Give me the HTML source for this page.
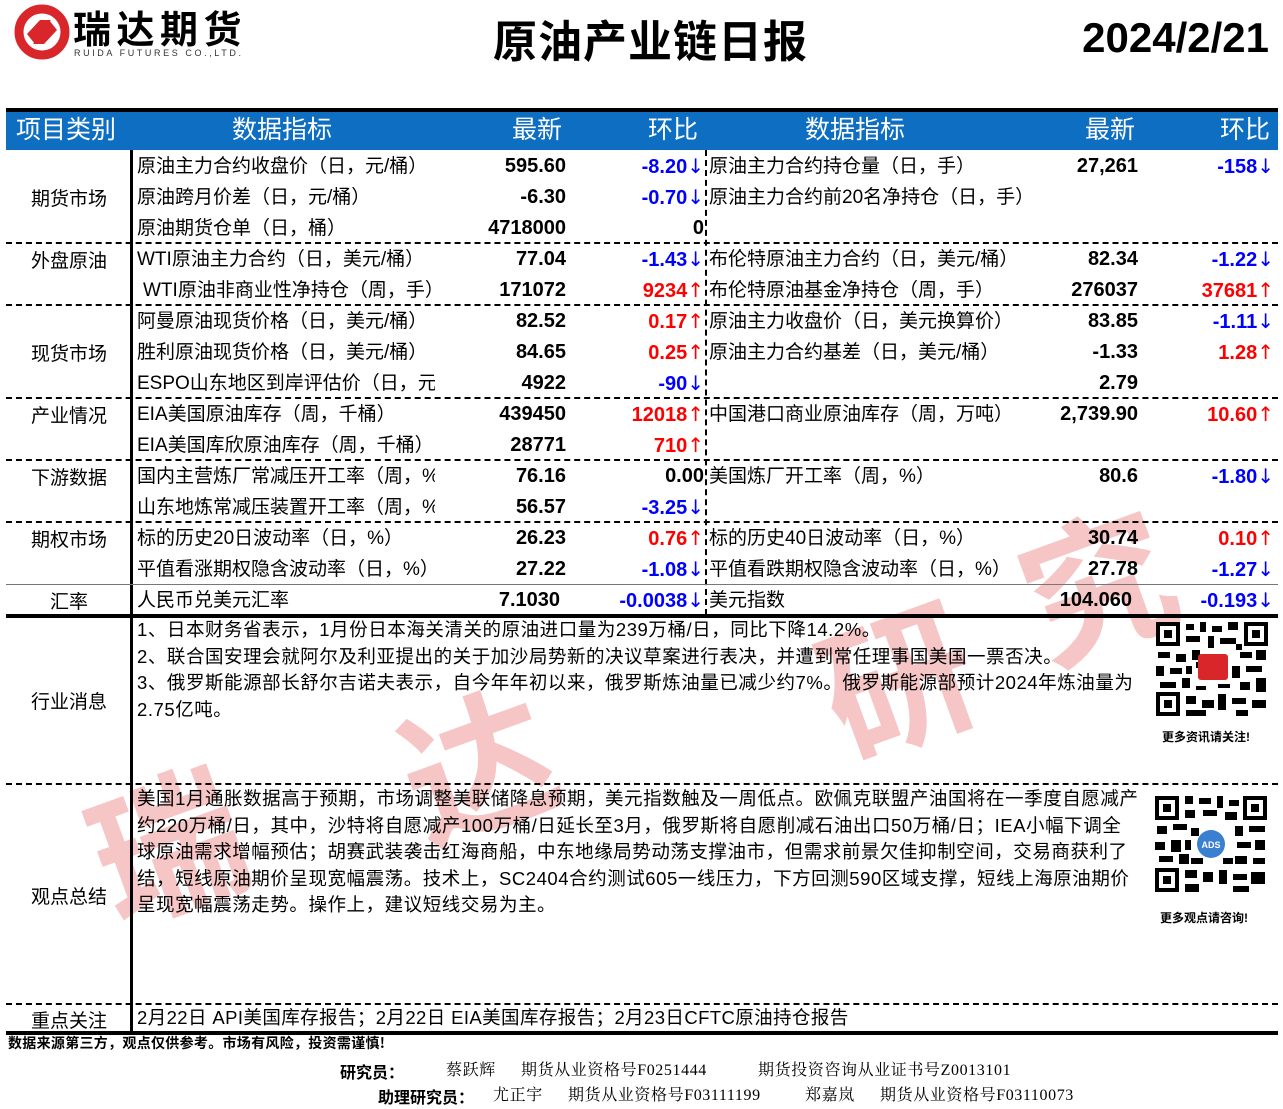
<!DOCTYPE html>
<html><head><meta charset="utf-8">
<style>
*{margin:0;padding:0;box-sizing:border-box}
body{width:1283px;height:1109px;background:#fff;position:relative;overflow:hidden;font-family:"Liberation Sans","Noto Sans CJK SC",sans-serif;color:#000}
.a{position:absolute;white-space:nowrap}
.t{font-size:19px;line-height:31px;height:31px}
.n{font-weight:bold;text-align:right;font-size:20px}
.n i{font-style:normal;font-family:"DejaVu Sans",sans-serif;font-weight:normal;font-size:20px}
.b{color:#0000ff}.r{color:#ff0000}
.hd{color:#fff;font-size:25px;line-height:38px;top:111px}
.dash{position:absolute;left:6px;width:1272px;border-top:2px dashed #000;height:0}
.wm{position:absolute;color:#f4b4b4;opacity:.75;font-weight:bold;font-size:150px;font-family:"Noto Sans CJK SC",sans-serif;transform:rotate(-20deg)}
.cat{position:absolute;left:6px;width:126px;text-align:center;font-size:19px}
.p{font-size:18.5px;line-height:26.5px;position:absolute;left:137px;letter-spacing:0.55px}
.f{position:absolute;font-size:16px;line-height:22px;font-family:'Liberation Serif','Noto Serif CJK SC',serif;white-space:nowrap;letter-spacing:0.6px}
.fb{position:absolute;font-size:16px;line-height:22px;font-weight:bold;font-family:'Noto Sans CJK SC',sans-serif;white-space:nowrap}
</style></head><body>
<div class="wm" style="left:90px;top:730px">瑞</div>
<div class="wm" style="left:400px;top:650px">达</div>
<div class="wm" style="left:820px;top:565px">研</div>
<div class="wm" style="left:1020px;top:470px">究</div>

<svg class="a" style="left:13px;top:4px" width="58" height="56" viewBox="0 0 58 56">
<circle cx="29" cy="28" r="23" fill="none" stroke="#d9262a" stroke-width="9"/>
<path d="M14 30 L27 16 L38 16 L26 28 L34 28 L22 40 Z" fill="#d9262a"/>
<path d="M44 26 L31 40 L20 40 L32 28 L24 28 L36 16 Z" fill="#d9262a"/>
</svg>
<div class="a" style="left:73px;top:4px;font-size:38px;font-weight:bold;letter-spacing:5.5px;line-height:46px;font-family:'Noto Sans CJK SC',sans-serif">瑞达期货</div>
<div class="a" style="left:74px;top:48px;font-size:9px;letter-spacing:2.6px;color:#333">RUIDA FUTURES CO.,LTD.</div>
<div class="a" style="left:493px;top:10px;font-size:44px;font-weight:bold;line-height:56px;letter-spacing:1px;font-family:'Noto Sans CJK SC',sans-serif">原油产业链日报</div>
<div class="a" style="right:14px;top:12px;font-size:42px;font-weight:bold;line-height:52px">2024/2/21</div>

<div class="a" style="left:6px;top:108px;width:1272px;height:4px;background:#000"></div>
<div class="a" style="left:6px;top:112px;width:1272px;height:38px;background:#0d6ec2"></div>
<div class="a hd" style="left:16px">项目类别</div>
<div class="a hd" style="left:232px">数据指标</div>
<div class="a hd" style="left:512px">最新</div>
<div class="a hd" style="left:648px">环比</div>
<div class="a hd" style="left:805px">数据指标</div>
<div class="a hd" style="left:1085px">最新</div>
<div class="a hd" style="left:1220px">环比</div>

<div class="a" style="left:130px;top:150px;width:3px;height:883px;background:#000"></div>
<div class="a" style="left:705px;top:150px;height:465px;border-left:2px dashed #000"></div>
<div class="dash" style="top:242px"></div>
<div class="dash" style="top:304px"></div>
<div class="dash" style="top:397px"></div>
<div class="dash" style="top:459px"></div>
<div class="dash" style="top:521px"></div>
<div class="a" style="left:6px;top:584px;width:1272px;height:1px;background:#777"></div>
<div class="a" style="left:6px;top:614px;width:1272px;height:4px;background:#000"></div>
<div class="dash" style="top:783px"></div>
<div class="dash" style="top:1003px"></div>
<div class="a" style="left:6px;top:1031px;width:1272px;height:4px;background:#000"></div>

<div class="cat" style="top:184px">期货市场</div>
<div class="cat" style="top:246px">外盘原油</div>
<div class="cat" style="top:339px">现货市场</div>
<div class="cat" style="top:401px">产业情况</div>
<div class="cat" style="top:463px">下游数据</div>
<div class="cat" style="top:525px">期权市场</div>
<div class="cat" style="top:587px">汇率</div>
<div class="cat" style="top:687px">行业消息</div>
<div class="cat" style="top:882px">观点总结</div>
<div class="cat" style="top:1006px">重点关注</div>

<div style="position:absolute;left:0;top:151px">
<div class="a t" style="left:137px;top:0">原油主力合约收盘价（日，元/桶）</div><div class="a t n" style="right:-566px;top:0">595.60</div><div class="a t n b" style="right:-704px;top:0">-8.20<i>↓</i></div>
<div class="a t" style="left:709px;top:0">原油主力合约持仓量（日，手）</div><div class="a t n" style="right:-1138px;top:0">27,261</div><div class="a t n b" style="right:-1274px;top:0">-158<i>↓</i></div>

<div class="a t" style="left:137px;top:31px">原油跨月价差（日，元/桶）</div><div class="a t n" style="right:-566px;top:31px">-6.30</div><div class="a t n b" style="right:-704px;top:31px">-0.70<i>↓</i></div>
<div class="a t" style="left:709px;top:31px">原油主力合约前20名净持仓（日，手）</div>

<div class="a t" style="left:137px;top:62px">原油期货仓单（日，桶）</div><div class="a t n" style="right:-566px;top:62px">4718000</div><div class="a t n" style="right:-704px;top:62px">0</div>

<div class="a t" style="left:137px;top:93px">WTI原油主力合约（日，美元/桶）</div><div class="a t n" style="right:-566px;top:93px">77.04</div><div class="a t n b" style="right:-704px;top:93px">-1.43<i>↓</i></div>
<div class="a t" style="left:709px;top:93px">布伦特原油主力合约（日，美元/桶）</div><div class="a t n" style="right:-1138px;top:93px">82.34</div><div class="a t n b" style="right:-1274px;top:93px">-1.22<i>↓</i></div>

<div class="a t" style="left:143px;top:124px">WTI原油非商业性净持仓（周，手）</div><div class="a t n" style="right:-566px;top:124px">171072</div><div class="a t n r" style="right:-704px;top:124px">9234<i>↑</i></div>
<div class="a t" style="left:709px;top:124px">布伦特原油基金净持仓（周，手）</div><div class="a t n" style="right:-1138px;top:124px">276037</div><div class="a t n r" style="right:-1274px;top:124px">37681<i>↑</i></div>

<div class="a t" style="left:137px;top:155px">阿曼原油现货价格（日，美元/桶）</div><div class="a t n" style="right:-566px;top:155px">82.52</div><div class="a t n r" style="right:-704px;top:155px">0.17<i>↑</i></div>
<div class="a t" style="left:709px;top:155px">原油主力收盘价（日，美元换算价）</div><div class="a t n" style="right:-1138px;top:155px">83.85</div><div class="a t n b" style="right:-1274px;top:155px">-1.11<i>↓</i></div>

<div class="a t" style="left:137px;top:186px">胜利原油现货价格（日，美元/桶）</div><div class="a t n" style="right:-566px;top:186px">84.65</div><div class="a t n r" style="right:-704px;top:186px">0.25<i>↑</i></div>
<div class="a t" style="left:709px;top:186px">原油主力合约基差（日，美元/桶）</div><div class="a t n" style="right:-1138px;top:186px">-1.33</div><div class="a t n r" style="right:-1274px;top:186px">1.28<i>↑</i></div>

<div class="a t" style="left:137px;top:217px;width:298px;overflow:hidden">ESPO山东地区到岸评估价（日，元/</div><div class="a t n" style="right:-566px;top:217px">4922</div><div class="a t n b" style="right:-704px;top:217px">-90<i>↓</i></div>
<div class="a t n" style="right:-1138px;top:217px">2.79</div>

<div class="a t" style="left:137px;top:248px">EIA美国原油库存（周，千桶）</div><div class="a t n" style="right:-566px;top:248px">439450</div><div class="a t n r" style="right:-704px;top:248px">12018<i>↑</i></div>
<div class="a t" style="left:709px;top:248px">中国港口商业原油库存（周，万吨）</div><div class="a t n" style="right:-1138px;top:248px">2,739.90</div><div class="a t n r" style="right:-1274px;top:248px">10.60<i>↑</i></div>

<div class="a t" style="left:137px;top:279px">EIA美国库欣原油库存（周，千桶）</div><div class="a t n" style="right:-566px;top:279px">28771</div><div class="a t n r" style="right:-704px;top:279px">710<i>↑</i></div>

<div class="a t" style="left:137px;top:310px;width:298px;overflow:hidden">国内主营炼厂常减压开工率（周，%</div><div class="a t n" style="right:-566px;top:310px">76.16</div><div class="a t n" style="right:-704px;top:310px">0.00</div>
<div class="a t" style="left:709px;top:310px">美国炼厂开工率（周，%）</div><div class="a t n" style="right:-1138px;top:310px">80.6</div><div class="a t n b" style="right:-1274px;top:310px">-1.80<i>↓</i></div>

<div class="a t" style="left:137px;top:341px;width:298px;overflow:hidden">山东地炼常减压装置开工率（周，%</div><div class="a t n" style="right:-566px;top:341px">56.57</div><div class="a t n b" style="right:-704px;top:341px">-3.25<i>↓</i></div>

<div class="a t" style="left:137px;top:372px">标的历史20日波动率（日，%）</div><div class="a t n" style="right:-566px;top:372px">26.23</div><div class="a t n r" style="right:-704px;top:372px">0.76<i>↑</i></div>
<div class="a t" style="left:709px;top:372px">标的历史40日波动率（日，%）</div><div class="a t n" style="right:-1138px;top:372px">30.74</div><div class="a t n r" style="right:-1274px;top:372px">0.10<i>↑</i></div>

<div class="a t" style="left:137px;top:403px">平值看涨期权隐含波动率（日，%）</div><div class="a t n" style="right:-566px;top:403px">27.22</div><div class="a t n b" style="right:-704px;top:403px">-1.08<i>↓</i></div>
<div class="a t" style="left:709px;top:403px">平值看跌期权隐含波动率（日，%）</div><div class="a t n" style="right:-1138px;top:403px">27.78</div><div class="a t n b" style="right:-1274px;top:403px">-1.27<i>↓</i></div>

<div class="a t" style="left:137px;top:434px">人民币兑美元汇率</div><div class="a t n" style="right:-560px;top:434px">7.1030</div><div class="a t n b" style="right:-704px;top:434px">-0.0038<i>↓</i></div>
<div class="a t" style="left:709px;top:434px">美元指数</div><div class="a t n" style="right:-1132px;top:434px">104.060</div><div class="a t n b" style="right:-1274px;top:434px">-0.193<i>↓</i></div>
</div>

<div class="p" style="top:617px;width:1010px">1、日本财务省表示，1月份日本海关清关的原油进口量为239万桶/日，同比下降14.2%。<br>2、联合国安理会就阿尔及利亚提出的关于加沙局势新的决议草案进行表决，并遭到常任理事国美国一票否决。<br>3、俄罗斯能源部长舒尔吉诺夫表示，自今年年初以来，俄罗斯炼油量已减少约7%。俄罗斯能源部预计2024年炼油量为<br>2.75亿吨。</div>
<div class="p" style="top:786px;width:1008px">美国1月通胀数据高于预期，市场调整美联储降息预期，美元指数触及一周低点。欧佩克联盟产油国将在一季度自愿减产<br>约220万桶/日，其中，沙特将自愿减产100万桶/日延长至3月，俄罗斯将自愿削减石油出口50万桶/日；IEA小幅下调全<br>球原油需求增幅预估；胡赛武装袭击红海商船，中东地缘局势动荡支撑油市，但需求前景欠佳抑制空间，交易商获利了<br>结，短线原油期价呈现宽幅震荡。技术上，SC2404合约测试605一线压力，下方回测590区域支撑，短线上海原油期价<br>呈现宽幅震荡走势。操作上，建议短线交易为主。</div>
<div class="a" style="left:137px;top:1005px;font-size:18.5px;line-height:26px;letter-spacing:0.4px">2月22日 API美国库存报告；2月22日 EIA美国库存报告；2月23日CFTC原油持仓报告</div>

<svg class="a" style="left:1156px;top:622px" width="112" height="94" viewBox="0 0 112 94">
<rect width="112" height="94" fill="#fff"/>
<g fill="#000"><rect x="0" y="0" width="24" height="24"/><rect x="88" y="0" width="24" height="24"/><rect x="0" y="70" width="24" height="24"/></g>
<g fill="#fff"><rect x="4" y="4" width="16" height="16"/><rect x="92" y="4" width="16" height="16"/><rect x="4" y="74" width="16" height="16"/></g>
<g fill="#000"><rect x="8" y="8" width="8" height="8"/><rect x="96" y="8" width="8" height="8"/><rect x="8" y="78" width="8" height="8"/>
<path d="M30 2h8v6h-8zM44 0h6v10h-6zM56 4h10v6h-10zM72 0h10v8h-10zM30 14h14v6h-14zM52 14h6v12h-6zM64 16h16v6h-16zM2 30h12v6h-12zM20 32h10v8h-10zM36 28h8v10h-8zM84 30h12v6h-12zM100 28h10v10h-10zM0 44h8v10h-8zM14 46h12v6h-12zM76 44h8v12h-8zM90 44h16v6h-16zM4 60h16v6h-16zM26 56h8v10h-8zM84 60h10v8h-10zM100 56h10v14h-10zM30 74h10v8h-10zM46 78h12v8h-12zM62 72h8v16h-8zM76 76h14v6h-14zM96 78h14v8h-14zM30 88h20v6h-20zM80 88h12v6h-12zM40 40h6v6h-6zM80 22h6v6h-6zM30 44h6v8h-6zM40 64h10v4h-10zM62 62h12v4h-12z"/></g>
<rect x="42" y="32" width="30" height="26" rx="3" fill="#d9262a"/>
</svg>
<div class="a" style="left:1162px;top:728px;font-size:12px;font-weight:bold">更多资讯请关注!</div>
<svg class="a" style="left:1155px;top:796px" width="112" height="96" viewBox="0 0 112 96">
<rect width="112" height="96" fill="#fff"/>
<g fill="#000"><rect x="0" y="0" width="24" height="24"/><rect x="88" y="0" width="24" height="24"/><rect x="0" y="72" width="24" height="24"/></g>
<g fill="#fff"><rect x="4" y="4" width="16" height="16"/><rect x="92" y="4" width="16" height="16"/><rect x="4" y="76" width="16" height="16"/></g>
<g fill="#000"><rect x="8" y="8" width="8" height="8"/><rect x="96" y="8" width="8" height="8"/><rect x="8" y="80" width="8" height="8"/>
<path d="M30 0h8v8h-8zM44 2h12v6h-12zM62 0h6v12h-6zM74 4h10v6h-10zM30 14h10v8h-10zM48 14h14v6h-14zM70 16h12v8h-12zM2 30h10v8h-10zM18 28h14v6h-14zM36 32h8v8h-8zM80 30h8v10h-8zM94 30h16v6h-16zM0 46h10v8h-10zM16 44h10v12h-10zM82 46h14v6h-14zM100 44h10v10h-10zM4 60h14v6h-14zM24 58h10v10h-10zM80 60h12v8h-12zM98 62h12v6h-12zM30 74h12v8h-12zM48 76h10v10h-10zM64 74h8v14h-8zM78 78h14v6h-14zM96 76h14v12h-14zM30 88h14v8h-14zM78 90h16v6h-16zM30 44h6v10h-6zM36 62h12v6h-12zM68 62h10v6h-10z"/></g>
<circle cx="56" cy="48" r="14" fill="#3a7fd0"/>
<text x="56" y="52" font-size="9" font-weight="bold" fill="#fff" text-anchor="middle" font-family="Liberation Sans">ADS</text>
</svg>
<div class="a" style="left:1160px;top:909px;font-size:12px;font-weight:bold">更多观点请咨询!</div>

<div class="a" style="left:8px;top:1034px;font-size:14px;font-weight:bold;line-height:18px;letter-spacing:0.3px;font-family:'Noto Sans CJK SC',sans-serif">数据来源第三方，观点仅供参考。市场有风险，投资需谨慎!</div>
<div class="fb" style="left:340px;top:1060px">研究员：</div>
<div class="f" style="left:446px;top:1060px">蔡跃辉</div>
<div class="f" style="left:521px;top:1060px">期货从业资格号F0251444</div>
<div class="f" style="left:758px;top:1060px">期货投资咨询从业证书号Z0013101</div>
<div class="fb" style="left:378px;top:1085px">助理研究员：</div>
<div class="f" style="left:493px;top:1085px">尤正宇</div>
<div class="f" style="left:568px;top:1085px">期货从业资格号F03111199</div>
<div class="f" style="left:805px;top:1085px">郑嘉岚</div>
<div class="f" style="left:880px;top:1085px">期货从业资格号F03110073</div>
</body></html>
